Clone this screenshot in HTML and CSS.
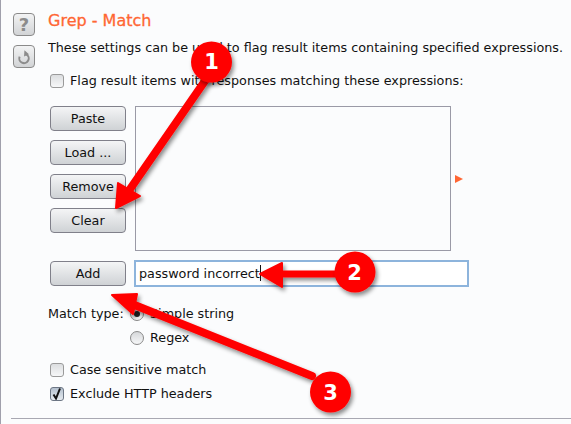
FILE: index.html
```html
<!DOCTYPE html>
<html lang="en">

<head>
    <meta charset="UTF-8">
    <meta name="viewport" content="width=device-width, initial-scale=1.0">
    <title>Grep - Match</title>
    <link rel="stylesheet" href="styles.css">
</head>

<body>
    <div class="panel">
        <!-- Help and restore buttons -->
        <div class="side">
            <div class="iconButton helpIcon">?</div>
            <div class="iconButton">
                <svg width="22" height="22" viewBox="0 0 22 22">
                    <path d="M13.5 8 A5.2 5.2 0 1 1 6.2 10.5" fill="none" stroke="#8c8c8c" stroke-width="2.2"/>
                    <path d="M11.5 3.5 L16.5 8 L11 10.5 Z" fill="#8c8c8c"/>
                </svg>
            </div>
        </div>

        <div class="main">
            <h2 class="title">Grep - Match</h2>
            <p class="intro">These settings can be used to flag result items containing specified expressions.</p>

            <label class="check flagRow"><span class="box"></span>Flag result items with responses matching these expressions:</label>

            <div class="listRow">
                <div class="buttons">
                    <button class="btn">Paste</button>
                    <button class="btn">Load ...</button>
                    <button class="btn">Remove</button>
                    <button class="btn">Clear</button>
                </div>
                <div class="listBox"></div>
                <span class="pointer"></span>
            </div>

            <div class="addRow">
                <button class="btn">Add</button>
                <div class="textInput">password incorrect<span class="caret"></span></div>
            </div>

            <div class="matchType">
                <span class="matchLabel">Match type:</span>
                <div class="radios">
                    <label class="radio"><span class="dot on"></span>Simple string</label>
                    <label class="radio"><span class="dot"></span>Regex</label>
                </div>
            </div>

            <div class="options">
                <label class="check"><span class="box"></span>Case sensitive match</label>
                <label class="check"><span class="box checked">
                    <svg width="12" height="12" viewBox="0 0 12 12"><path d="M2.5 6.5 L5 10.5 L9 0.5" fill="none" stroke="#111" stroke-width="2"/></svg>
                </span>Exclude HTTP headers</label>
            </div>
        </div>
    </div>
    <div class="divider"></div>

    <!-- Red callouts drawn on top of the screenshot -->
    <svg class="callouts" width="571" height="424" viewBox="0 0 571 424">
        <defs>
            <filter id="drop" x="-30%" y="-30%" width="160%" height="160%">
                <feDropShadow dx="2" dy="3" stdDeviation="2.2" flood-color="#000" flood-opacity="0.45"/>
            </filter>
        </defs>
        <g filter="url(#drop)">
            <path d="M207 78 L128 192" stroke="#f00" stroke-width="8" stroke-linecap="round"/>
            <path d="M116 208 L118 183 L140 196 Z" fill="#f00" stroke="#f00" stroke-width="2" stroke-linejoin="round"/>
        </g>
        <g filter="url(#drop)">
            <path d="M345 274 L280 274" stroke="#f00" stroke-width="7"/>
            <path d="M260 274 L282 263 L282 287 Z" fill="#f00" stroke="#f00" stroke-width="2" stroke-linejoin="round"/>
        </g>
        <g filter="url(#drop)">
            <path d="M312 376 L132 304" stroke="#f00" stroke-width="8" stroke-linecap="round"/>
            <path d="M112 295 L137 294 L133 314 Z" fill="#f00" stroke="#f00" stroke-width="2" stroke-linejoin="round"/>
        </g>
        <g filter="url(#drop)">
            <circle cx="211.5" cy="62" r="20.5" fill="#f00"/>
            <circle cx="355" cy="272" r="20.5" fill="#f00"/>
            <circle cx="330.5" cy="392" r="20.5" fill="#f00"/>
        </g>
        <text class="num" x="211.5" y="69">1</text>
        <text class="num" x="354.5" y="280">2</text>
        <text class="num" x="330.5" y="400">3</text>
    </svg>
</body>

</html>
```

FILE: styles.css
```css
body {
    margin: 0;
    width: 571px;
    height: 424px;
    overflow: hidden;
    position: relative;
    font-family: "DejaVu Sans", sans-serif;
    font-size: 12.75px;
    color: #111;
    background-color: #fbfcfd;
    border-left: 1px solid #a0a0ac;
    box-sizing: border-box;
}

.panel {
    display: flex;
    padding-top: 13px;
    padding-left: 12px;
    height: 405px;
    box-sizing: border-box;
}

.side {
    width: 35px;
    flex: none;
}

.iconButton {
    width: 22px;
    height: 23px;
    margin-bottom: 9px;
    border: 1px solid #8a8a8a;
    border-radius: 4px;
    background: linear-gradient(#f2f3f4, #d2d4d6);
    box-sizing: border-box;
    display: flex;
    align-items: center;
    justify-content: center;
}

.helpIcon {
    font-size: 18px;
    font-weight: bold;
    color: #8c8c8c;
}

.title {
    margin: 0;
    font-size: 16px;
    line-height: 15px;
    font-weight: normal;
    color: #ff6633;
    -webkit-text-stroke: 0.3px #ff6633;
}

.intro {
    margin: 11px 0 0;
    line-height: 17px;
    white-space: nowrap;
}

.check {
    display: flex;
    align-items: center;
    height: 17px;
    white-space: nowrap;
}

.flagRow {
    margin: 16px 0 0 2px;
}

.box {
    width: 14px;
    height: 14px;
    margin-right: 6px;
    border: 1px solid #9a9a9a;
    border-radius: 3px;
    box-sizing: border-box;
    background: linear-gradient(#dcdee0, #f6f7f8);
    display: block;
    flex: none;
}

.box.checked {
    background: linear-gradient(#b4c0ce, #e6ebf0);
    border-color: #6c7684;
}

.box svg {
    display: block;
}

.listRow {
    display: flex;
    margin: 17px 0 0 2px;
}

.buttons {
    display: flex;
    flex-direction: column;
    gap: 9px;
    width: 76px;
    margin-right: 9px;
}

.btn {
    width: 76px;
    height: 25px;
    padding: 0;
    border: 1px solid #80808a;
    border-radius: 4px;
    background: linear-gradient(#f4f5f6, #cfd2d5);
    font-family: "DejaVu Sans", sans-serif;
    font-size: 12.75px;
    color: #111;
}

.listBox {
    width: 316px;
    height: 145px;
    border: 1px solid #9a9aa6;
    box-sizing: border-box;
    background-color: #fbfcfd;
}

.pointer {
    width: 0;
    height: 0;
    margin: 69px 0 0 4px;
    border-left: 8px solid #ff6633;
    border-top: 4.5px solid transparent;
    border-bottom: 4.5px solid transparent;
}

.addRow {
    display: flex;
    align-items: center;
    margin: 9px 0 0 2px;
    gap: 8px;
}

.textInput {
    width: 335px;
    height: 27px;
    padding-left: 3px;
    border: 2px solid #8db4dc;
    box-sizing: border-box;
    background-color: #fff;
    line-height: 23px;
    white-space: nowrap;
}

.caret {
    display: inline-block;
    width: 1px;
    height: 16px;
    background-color: #111;
    vertical-align: -3px;
}

.matchType {
    display: flex;
    margin-top: 18px;
}

.matchLabel {
    width: 82px;
    line-height: 17px;
}

.radio {
    display: flex;
    align-items: center;
    height: 17px;
    margin-bottom: 7px;
}

.dot {
    width: 14px;
    height: 14px;
    margin-right: 6px;
    border: 1px solid #8a8a8a;
    border-radius: 50%;
    box-sizing: border-box;
    background: linear-gradient(#d6d8da, #f6f7f8);
    position: relative;
    flex: none;
}

.dot.on::after {
    content: "";
    position: absolute;
    left: 3px;
    top: 3px;
    width: 6px;
    height: 6px;
    border-radius: 50%;
    background-color: #222;
}

.options {
    margin: 8px 0 0 2px;
    display: flex;
    flex-direction: column;
    gap: 7px;
}

.divider {
    height: 1px;
    margin-left: 10px;
    margin-top: 13px;
    background-color: #a8a8b2;
}

.callouts {
    position: absolute;
    left: -1px;
    top: 0;
}

.num {
    font-family: "DejaVu Sans", sans-serif;
    font-size: 21px;
    font-weight: bold;
    fill: #fff;
    text-anchor: middle;
}
```
